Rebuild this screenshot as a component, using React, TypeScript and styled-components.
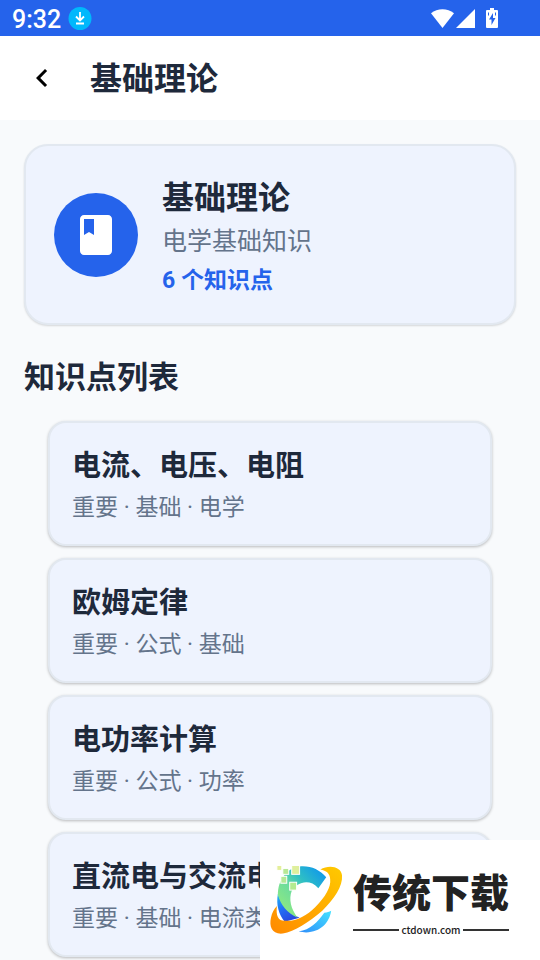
import React from "react";
import styled, { createGlobalStyle } from "styled-components";

const GlobalStyle = createGlobalStyle`
  *, *::before, *::after { box-sizing: border-box; }
  body {
    margin: 0;
    background: #f8fafc;
    color: #1e293b;
    font-family: Roboto, "Noto Sans CJK SC", sans-serif;
  }
  h1, h2, h3, p, ul { margin: 0; padding: 0; }
`;

const Page = styled.div`
  min-height: 100vh;
  display: flex;
  flex-direction: column;
`;

const StatusBar = styled.div`
  height: 36px;
  padding: 0 42px 0 12px;
  display: flex;
  align-items: center;
  background: #2563eb;
  color: #fff;
`;

const Clock = styled.time`
  font-size: 25px;
  line-height: 32px;
  font-weight: 500;
  padding-top: 3px;
  margin-right: 7px;
`;

const StatusIcons = styled.div`
  margin-left: auto;
  display: flex;
  align-items: center;
  gap: 2px;
`;

const Battery = styled.svg`
  margin-left: 9px;
`;

const TopBar = styled.header`
  height: 84px;
  padding: 0 24px;
  display: flex;
  align-items: center;
  gap: 30px;
  background: #fff;
`;

const BackButton = styled.button`
  display: flex;
  width: 36px;
  height: 36px;
  padding: 0;
  border: 0;
  background: none;
  color: #000;
  cursor: pointer;
`;

const PageTitle = styled.h1`
  padding-top: 2px;
  font-size: 32px;
  line-height: 44px;
  font-weight: 700;
`;

const Content = styled.main`
  padding: 24px 24px 0;
`;

const SummaryCard = styled.section`
  display: flex;
  align-items: center;
  gap: 24px;
  padding: 24px 28px;
  border: 2px solid #e2e8f0;
  border-radius: 24px;
  background: #eef3fe;
  box-shadow: 0 1px 2px rgba(0, 0, 0, 0.14);
`;

const IconCircle = styled.div`
  flex: none;
  display: grid;
  place-items: center;
  width: 84px;
  height: 84px;
  border-radius: 50%;
  background: #2563eb;
`;

const SummaryBody = styled.div`
  padding-top: 5px;
`;

const SummaryTitle = styled.h2`
  font-size: 32px;
  line-height: 46px;
  font-weight: 700;
`;

const SummaryText = styled.p`
  font-size: 25px;
  line-height: 42px;
  font-weight: 400;
  color: #64748b;
`;

const SummaryCount = styled.p`
  font-size: 23px;
  line-height: 36px;
  font-weight: 700;
  color: #2563eb;
`;

const SectionTitle = styled.h2`
  margin-top: 31px;
  font-size: 31px;
  line-height: 44px;
  font-weight: 700;
`;

const TopicList = styled.ul`
  display: flex;
  flex-direction: column;
  gap: 12px;
  margin: 21px 24px 0;
  list-style: none;
`;

const TopicLink = styled.a`
  display: block;
  padding: 21px 22px 16px;
  border: 2px solid #e2e8f0;
  border-radius: 18px;
  background: #eef3fe;
  box-shadow: 0 1px 3px rgba(0, 0, 0, 0.26);
  color: inherit;
  text-decoration: none;
`;

const TopicTitle = styled.h3`
  font-size: 29px;
  line-height: 44px;
  font-weight: 700;
`;

const TopicTags = styled.p`
  font-size: 23px;
  line-height: 40px;
  font-weight: 400;
  color: #64748b;
`;

const SiteBadge = styled.aside`
  position: fixed;
  right: 0;
  bottom: 0;
  width: 280px;
  height: 120px;
  padding: 0 31px 0 8px;
  display: flex;
  align-items: center;
  gap: 8px;
  background: #fff;
  color: #222;
`;

const BadgeText = styled.div`
  flex: 1;
  display: flex;
  flex-direction: column;
`;

const BadgeName = styled.strong`
  font-family: "Noto Sans CJK SC", sans-serif;
  font-size: 39px;
  line-height: 60px;
  font-weight: 900;
  white-space: nowrap;
`;

const BadgeDomain = styled.span`
  display: flex;
  align-items: center;
  gap: 2px;
  font-family: "Noto Sans CJK SC", sans-serif;
  font-size: 10px;
  line-height: 20px;
  font-weight: 500;

  &::before,
  &::after {
    content: "";
    flex: 1;
    height: 2px;
    background: #333;
  }
`;

const topics = [
  { title: "电流、电压、电阻", tags: ["重要", "基础", "电学"] },
  { title: "欧姆定律", tags: ["重要", "公式", "基础"] },
  { title: "电功率计算", tags: ["重要", "公式", "功率"] },
  { title: "直流电与交流电", tags: ["重要", "基础", "电流类型"] },
];

const DownloadIcon = () => (
  <svg width="24" height="24" viewBox="0 0 24 24" aria-hidden="true">
    <circle cx="12" cy="12.5" r="11.5" fill="#00b8fc" />
    <path d="M12 6v8M8 10.500l4 4 4-4M8 17.500h8" fill="none" stroke="#fff" strokeWidth="1.8" />
  </svg>
);

const WifiIcon = () => (
  <svg width="23" height="19" viewBox="0 0 23 19" fill="#fff" aria-hidden="true">
    <path d="M0 4.200C6.500-1.200 16.500-1.200 23 4.200L11.500 19z" />
  </svg>
);

const SignalIcon = () => (
  <svg width="19" height="19" viewBox="0 0 19 19" fill="#fff" aria-hidden="true">
    <path d="M19 0v19H0z" />
  </svg>
);

const BatteryIcon = () => (
  <Battery width="12" height="20" viewBox="0 0 12 20" aria-hidden="true">
    <path d="M4 0h4v2h3q1 0 1 1v16q0 1-1 1H1q-1 0-1-1V3q0-1 1-1h3z" fill="#fff" />
    <path d="M7 5v5h2.500L5.500 17v-5.500H3z" fill="#2563eb" />
    <path d="M2.500 4.500v3M9.500 4.500v3" stroke="#2563eb" strokeWidth="1" />
  </Battery>
);

const ChevronIcon = () => (
  <svg width="36" height="36" viewBox="0 0 24 24" fill="currentColor" aria-hidden="true">
    <path d="M15.410 7.410 14 6l-6 6 6 6 1.410-1.410L10.830 12z" />
  </svg>
);

const BookIcon = () => (
  <svg width="48" height="48" viewBox="0 0 24 24" fill="#fff" aria-hidden="true">
    <path d="M18 2H6c-1.100 0-2 .9-2 2v16c0 1.100.9 2 2 2h12c1.100 0 2-.9 2-2V4c0-1.100-.9-2-2-2zM6 4h5v8l-2.500-1.500L6 12V4z" />
  </svg>
);

const SiteLogo = () => (
  <svg width="78" height="78" viewBox="0 0 78 78" aria-hidden="true">
    <defs>
      <linearGradient id="arcTop" x1="0.200" y1="1" x2="1" y2="0.200">
        <stop offset="0" stopColor="#90ea80" />
        <stop offset="0.400" stopColor="#6cdc9c" />
        <stop offset="0.650" stopColor="#2fbfc4" />
        <stop offset="1" stopColor="#129be8" />
      </linearGradient>
      <linearGradient id="arcLow" x1="0" y1="0" x2="0.500" y2="1">
        <stop offset="0" stopColor="#20b7f5" />
        <stop offset="0.500" stopColor="#2371f5" />
        <stop offset="1" stopColor="#2948e0" />
      </linearGradient>
      <linearGradient id="orbit" x1="0" y1="1" x2="1" y2="0">
        <stop offset="0" stopColor="#ff8900" />
        <stop offset="1" stopColor="#ffca00" />
      </linearGradient>
      <linearGradient id="tail" x1="0" y1="1" x2="1" y2="0">
        <stop offset="0" stopColor="#2f8dfa" />
        <stop offset="1" stopColor="#43e2ff" />
      </linearGradient>
    </defs>
    <path d="M10 33C8 44 11 54 17 61l15-4C22 53 15 46 10 33z" fill="url(#arcLow)" />
    <path d="M59 16C52 8 43 4 32 5 19 7 10 18 10 34c3 10 9 18 20 23C23 48 21 38 24 30c5-9 18-13 27-3z" fill="url(#arcTop)" />
    <path d="M64 50C62 64 50 75 31 71c12-2 19-9 26-19 3 0 5-1 7-2z" fill="url(#tail)" />
    <path d="M53 8C62 3 74 5 75 14c1 11-8 24-20 36C41 62 27 71 15 73 4 74 1 66 3 57c1-5 3-9 6-12-1 10 1 15 8 15 11 1 22-5 31-14 10-10 16-20 15-28 0-6-4-9-10-10z" fill="url(#orbit)" />
    <g stroke="#fff" strokeWidth="1">
      <rect x="9" y="4" width="5" height="5" fill="#e4ef9a" />
      <rect x="15" y="7" width="6" height="6" fill="#b7e895" />
      <rect x="24" y="4" width="8" height="9" fill="#dfef9c" />
      <rect x="13" y="15" width="6" height="7" fill="#b5e996" />
      <rect x="22" y="21" width="7" height="8" fill="#b4eb90" />
    </g>
  </svg>
);

export default function App() {
  return (
    <>
      <GlobalStyle />
      <Page>
        <StatusBar>
          <Clock>9:32</Clock>
          <DownloadIcon />
          <StatusIcons>
            <WifiIcon />
            <SignalIcon />
            <BatteryIcon />
          </StatusIcons>
        </StatusBar>
        <TopBar>
          <BackButton type="button" aria-label="返回">
            <ChevronIcon />
          </BackButton>
          <PageTitle>基础理论</PageTitle>
        </TopBar>
        <Content>
          <SummaryCard>
            <IconCircle>
              <BookIcon />
            </IconCircle>
            <SummaryBody>
              <SummaryTitle>基础理论</SummaryTitle>
              <SummaryText>电学基础知识</SummaryText>
              <SummaryCount>6 个知识点</SummaryCount>
            </SummaryBody>
          </SummaryCard>
          <SectionTitle>知识点列表</SectionTitle>
          <TopicList>
            {topics.map((topic) => (
              <li key={topic.title}>
                <TopicLink href="#">
                  <TopicTitle>{topic.title}</TopicTitle>
                  <TopicTags>{topic.tags.join(" · ")}</TopicTags>
                </TopicLink>
              </li>
            ))}
          </TopicList>
        </Content>
      </Page>
      <SiteBadge>
        <SiteLogo />
        <BadgeText>
          <BadgeName>传统下载</BadgeName>
          <BadgeDomain>ctdown.com</BadgeDomain>
        </BadgeText>
      </SiteBadge>
    </>
  );
}
